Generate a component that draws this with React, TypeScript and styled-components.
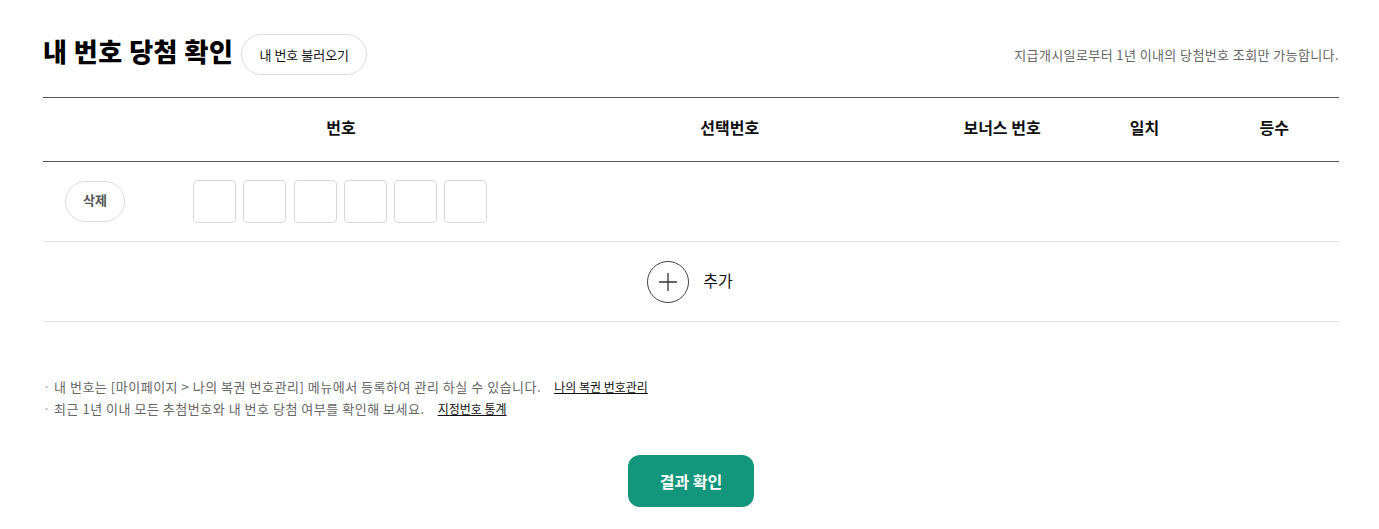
import React from "react";
import styled, { createGlobalStyle } from "styled-components";

const Global = createGlobalStyle`
  html, body { margin: 0; padding: 0; background: #fff; }
  body { font-family: "Noto Sans CJK KR", "Noto Sans", sans-serif; color: #111; }
  * { box-sizing: border-box; }
`;

const Page = styled.div`
  padding: 34px 40px 0 43px;
  width: 1379px;
`;

const TopBar = styled.div`
  display: flex;
  align-items: center;
  justify-content: space-between;
  height: 41px;
  margin-bottom: 22px;
`;

const TitleGroup = styled.div`
  display: flex;
  align-items: center;
  gap: 8px;
`;

const Title = styled.h2`
  margin: 0 0 8px;
  font-size: 26px;
  line-height: 1.2;
  font-weight: 900;
  letter-spacing: 0.5px;
  color: #000;
`;

const PillButton = styled.button<{ $w: number; $bold?: boolean }>`
  width: ${(p) => p.$w}px;
  height: 41px;
  border: 1px solid #dcdcdc;
  border-radius: 21px;
  background: #fff;
  font-family: inherit;
  font-size: 13px;
  font-weight: ${(p) => (p.$bold ? 700 : 400)};
  color: ${(p) => (p.$bold ? "#555" : "#111")};
  padding: 0 0 ${(p) => (p.$bold ? 4 : 1)}px;
  cursor: pointer;
`;

const Notice = styled.p`
  margin: 0;
  font-size: 13px;
  letter-spacing: 0.4px;
  color: #666;
`;

const Grid = styled.div`
  display: grid;
  grid-template-columns: 46% 22% 12% 10% 10%;
  align-items: center;
`;

const HeadRow = styled(Grid)`
  height: 65px;
  padding-bottom: 6px;
  border-top: 1px solid #555;
  border-bottom: 1px solid #555;
`;

const HeadCell = styled.div<{ $shift?: number }>`
  text-align: center;
  font-size: 16px;
  font-weight: 700;
  color: #111;
  padding-right: ${(p) => p.$shift || 0}px;
`;

const BodyRow = styled(Grid)`
  height: 80px;
  border-bottom: 1px solid #e2e2e2;
`;

const NumberCell = styled.div`
  display: flex;
  align-items: center;
  padding-left: 22px;
  gap: 68px;
`;

const Boxes = styled.div`
  display: flex;
  gap: 7.3px;
`;

const NumBox = styled.div`
  width: 43px;
  height: 43px;
  border: 1px solid #d8d8d8;
  border-radius: 4px;
  background: #fff;
`;

const AddRow = styled.div`
  height: 80px;
  border-bottom: 1px solid #e2e2e2;
  display: flex;
  align-items: center;
  justify-content: center;
  gap: 14px;
  padding-right: 2px;
`;

const AddCircle = styled.button`
  width: 42px;
  height: 42px;
  border-radius: 50%;
  border: 1px solid #444;
  background: #fff;
  padding: 0;
  display: flex;
  align-items: center;
  justify-content: center;
  cursor: pointer;
`;

const AddLabel = styled.span`
  font-size: 16px;
  color: #111;
  padding-bottom: 3px;
`;

const Notes = styled.ul`
  list-style: none;
  margin: 54px 0 0;
  padding: 0;
`;

const NoteItem = styled.li`
  position: relative;
  padding-left: 11px;
  font-size: 13px;
  line-height: 22px;
  letter-spacing: 0.52px;
  color: #666;
  &::before {
    content: "·";
    position: absolute;
    left: 0;
    top: 0;
    color: #999;
  }
`;

const NoteLink = styled.a`
  margin-left: 13px;
  color: #111;
  text-decoration: underline;
  font-size: 12px;
  letter-spacing: 0;
`;

const Actions = styled.div`
  display: flex;
  justify-content: center;
  margin-top: 35px;
`;

const Submit = styled.button`
  width: 126px;
  height: 52px;
  border: none;
  border-radius: 12px;
  background: #13967b;
  color: #fff;
  font-family: inherit;
  font-size: 16px;
  font-weight: 700;
  cursor: pointer;
`;

export default function App() {
  return (
    <>
      <Global />
      <Page>
        <TopBar>
          <TitleGroup>
            <Title>내 번호 당첨 확인</Title>
            <PillButton $w={126}>내 번호 불러오기</PillButton>
          </TitleGroup>
          <Notice>지급개시일로부터 1년 이내의 당첨번호 조회만 가능합니다.</Notice>
        </TopBar>

        <HeadRow>
          <HeadCell>번호</HeadCell>
          <HeadCell $shift={104}>선택번호</HeadCell>
          <HeadCell>보너스 번호</HeadCell>
          <HeadCell>일치</HeadCell>
          <HeadCell>등수</HeadCell>
        </HeadRow>

        <BodyRow>
          <NumberCell>
            <PillButton $w={60} $bold>삭제</PillButton>
            <Boxes>
              {[0, 1, 2, 3, 4, 5].map((i) => (
                <NumBox key={i} />
              ))}
            </Boxes>
          </NumberCell>
          <div />
          <div />
          <div />
          <div />
        </BodyRow>

        <AddRow>
          <AddCircle aria-label="추가">
            <svg width="20" height="20" viewBox="0 0 20 20">
              <path d="M10 1v18M1 10h18" stroke="#333" strokeWidth="1.3" fill="none" />
            </svg>
          </AddCircle>
          <AddLabel>추가</AddLabel>
        </AddRow>

        <Notes>
          <NoteItem>
            내 번호는 [마이페이지 &gt; 나의 복권 번호관리] 메뉴에서 등록하여 관리 하실 수 있습니다.
            <NoteLink href="#">나의 복권 번호관리</NoteLink>
          </NoteItem>
          <NoteItem>
            최근 1년 이내 모든 추첨번호와 내 번호 당첨 여부를 확인해 보세요.
            <NoteLink href="#">지정번호 통계</NoteLink>
          </NoteItem>
        </Notes>

        <Actions>
          <Submit>결과 확인</Submit>
        </Actions>
      </Page>
    </>
  );
}
